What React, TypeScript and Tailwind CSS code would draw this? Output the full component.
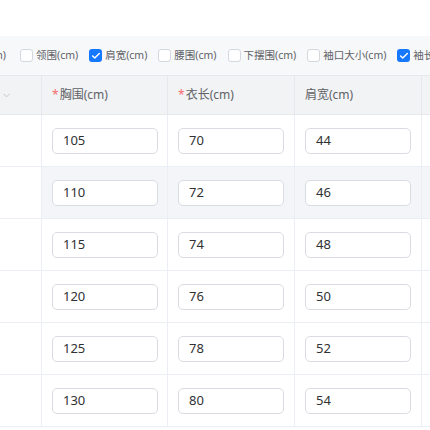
import React from 'react';
import { ChevronDown, Check } from 'lucide-react';

const options = [
  { label: '领围(cm)', checked: false },
  { label: '肩宽(cm)', checked: true },
  { label: '腰围(cm)', checked: false },
  { label: '下摆围(cm)', checked: false },
  { label: '袖口大小(cm)', checked: false },
  { label: '袖长(cm)', checked: true },
];

const rows = [
  ['105', '70', '44'],
  ['110', '72', '46'],
  ['115', '74', '48'],
  ['120', '76', '50'],
  ['125', '78', '52'],
  ['130', '80', '54'],
];

const font = { fontFamily: '"Noto Sans", "Noto Sans CJK SC", sans-serif' };

const Box: React.FC<{ checked: boolean }> = ({ checked }) =>
  checked ? (
    <span className="w-[13px] h-[13px] rounded-[3px] bg-[#1677ff] flex items-center justify-center shrink-0">
      <Check className="w-[10px] h-[10px] text-white" strokeWidth={3.5} />
    </span>
  ) : (
    <span className="w-[13px] h-[13px] rounded-[3px] border border-[#d4d7de] bg-white shrink-0" />
  );

const Field: React.FC<{ value: string }> = ({ value }) => (
  <div className="h-[26px] w-[106px] rounded-[5px] border border-[#d9dce2] bg-white flex items-center pl-[10px] text-[13px] text-[#303133]">
    {value}
  </div>
);

export default function App() {
  return (
    <div className="w-[430px] h-[430px] overflow-hidden bg-white pt-[36px]" style={font}>
      {/* column picker */}
      <div className="h-[39px] bg-[#f7f8fa] flex items-center whitespace-nowrap text-[10.5px] text-[#606266]">
        <span className="ml-[-22px] w-[28px] text-right shrink-0">(cm)</span>
        {options.map((o, i) => (
          <label key={o.label} className={`flex items-center gap-[3px] shrink-0 ${i === 0 ? 'ml-[14px]' : 'ml-[11px]'}`}>
            <Box checked={o.checked} />
            <span>{o.label}</span>
          </label>
        ))}
      </div>

      {/* table */}
      <div className="grid grid-cols-[42px_126px_127px_127px_200px] w-[622px] text-[12px]">
        <div className="h-[40px] bg-[#f2f3f5] border-t border-b border-r border-[#e6e8ec] flex items-center pl-[1px]">
          <ChevronDown className="w-[11px] h-[11px] text-[#b0b3b8]" strokeWidth={1.5} />
        </div>
        <div className="h-[40px] bg-[#f2f3f5] border-t border-b border-r border-[#e6e8ec] flex items-center pl-[10px] text-[#606266]">
          <span className="text-[#f56c6c] mr-[1px]">*</span>胸围(cm)
        </div>
        <div className="h-[40px] bg-[#f2f3f5] border-t border-b border-r border-[#e6e8ec] flex items-center pl-[10px] text-[#606266]">
          <span className="text-[#f56c6c] mr-[1px]">*</span>衣长(cm)
        </div>
        <div className="h-[40px] bg-[#f2f3f5] border-t border-b border-r border-[#e6e8ec] flex items-center pl-[10px] text-[#606266]">
          肩宽(cm)
        </div>
        <div className="h-[40px] bg-[#f2f3f5] border-t border-b border-[#e6e8ec]" />

        {rows.map((r, i) => {
          const bg = i === 1 ? 'bg-[#f3f5f8]' : 'bg-white';
          return (
            <React.Fragment key={i}>
              <div className="h-[52px] bg-white border-b border-r border-[#ebeef5]" />
              {r.map((v, j) => (
                <div key={j} className={`h-[52px] ${bg} border-b border-r border-[#ebeef5] flex items-center pl-[10px]`}>
                  <Field value={v} />
                </div>
              ))}
              <div className={`h-[52px] ${bg} border-b border-[#ebeef5]`} />
            </React.Fragment>
          );
        })}
      </div>
    </div>
  );
}
